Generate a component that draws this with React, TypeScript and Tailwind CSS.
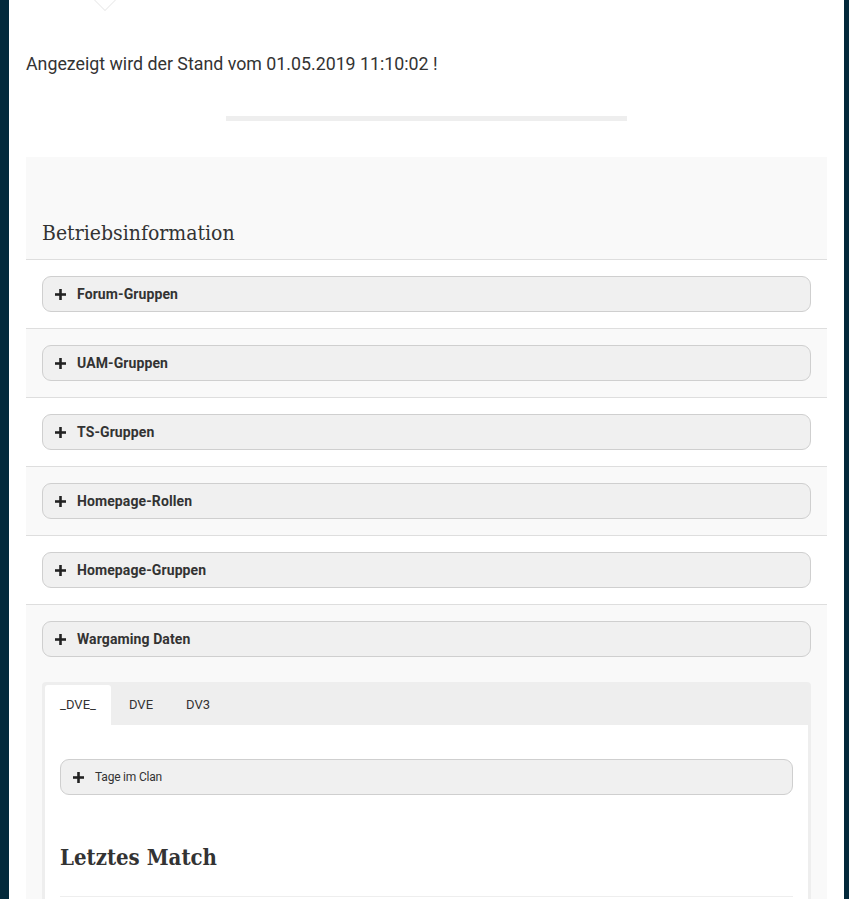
import React from "react";

const Plus = ({ size = 11 }: { size?: number }) => (
  <svg width={size} height={size} viewBox="0 0 12 12" className="shrink-0">
    <rect x="4.6" y="0" width="2.8" height="12" fill="#222" />
    <rect x="0" y="4.6" width="12" height="2.8" fill="#222" />
  </svg>
);

const rows = [
  "Forum-Gruppen",
  "UAM-Gruppen",
  "TS-Gruppen",
  "Homepage-Rollen",
  "Homepage-Gruppen",
];

function AccBtn({ label }: { label: string }) {
  return (
    <div className="h-[36px] rounded-[9px] border border-[#cfcfcf] bg-[#f0f0f0] flex items-center pl-[12px] gap-[11px]">
      <Plus />
      <span className="text-[14px] font-bold text-[#333] tracking-[0.1px]">{label}</span>
    </div>
  );
}

export default function App() {
  return (
    <div
      className="w-[849px] h-[899px] overflow-hidden bg-[#03293b] flex"
      style={{ fontFamily: "Roboto, 'Liberation Sans', sans-serif" }}
    >
      <div className="ml-[9px] w-[835px] bg-white relative">
        <div className="absolute left-[86px] -top-[13px] w-[20px] h-[20px] rotate-45 border border-[#ececec] bg-white" />
        <div className="pl-[17px] pr-[17px]">
          <p className="pt-[52px] text-[17.8px] text-[#333] leading-[24px]">
            Angezeigt wird der Stand vom 01.05.2019 11:10:02 !
          </p>
          <div className="mt-[40px] ml-[200px] w-[401px] h-[5px] bg-[#eeeeee]" />
          <div className="mt-[36px] bg-[#f9f9f9]">
            <div className="h-[103px] flex items-end px-[16px] pb-[14px] border-b border-[#dedede]">
              <h2
                className="text-[21px] text-[#333] leading-[24px]"
                style={{ fontFamily: "'DejaVu Serif Condensed', 'DejaVu Serif', serif" }}
              >
                Betriebsinformation
              </h2>
            </div>
            {rows.map((r, i) => (
              <div
                key={r}
                className={`h-[69px] px-[16px] pt-[16px] border-b border-[#dedede] ${
                  i % 2 === 0 ? "bg-white" : "bg-[#f9f9f9]"
                }`}
              >
                <AccBtn label={r} />
              </div>
            ))}
            <div className="px-[16px] pt-[16px] bg-[#f9f9f9]">
              <AccBtn label="Wargaming Daten" />
              <div className="mt-[25px] bg-[#eeeeee] rounded-t-[4px] px-[3px] pt-[3px] pb-[40px]">
                <div className="flex h-[40px] text-[13px] text-[#333]">
                  <div className="w-[66px] bg-white rounded-t-[3px] flex items-center justify-center">_DVE_</div>
                  <div className="w-[60px] flex items-center justify-center">DVE</div>
                  <div className="w-[54px] flex items-center justify-center">DV3</div>
                </div>
                <div className="bg-white px-[15px] pt-[34px] pb-[40px]">
                  <div className="h-[36px] rounded-[9px] border border-[#cfcfcf] bg-[#f0f0f0] flex items-center pl-[12px] gap-[11px]">
                    <Plus />
                    <span className="text-[12px] text-[#333] tracking-[-0.2px]">Tage im Clan</span>
                  </div>
                  <h3
                    className="mt-[48px] text-[22px] font-bold text-[#333] leading-[28px]"
                    style={{ fontFamily: "'DejaVu Serif Condensed', 'DejaVu Serif', serif" }}
                  >
                    Letztes Match
                  </h3>
                  <div className="mt-[25px] h-px bg-[#eee]" />
                </div>
              </div>
            </div>
          </div>
        </div>
      </div>
    </div>
  );
}
